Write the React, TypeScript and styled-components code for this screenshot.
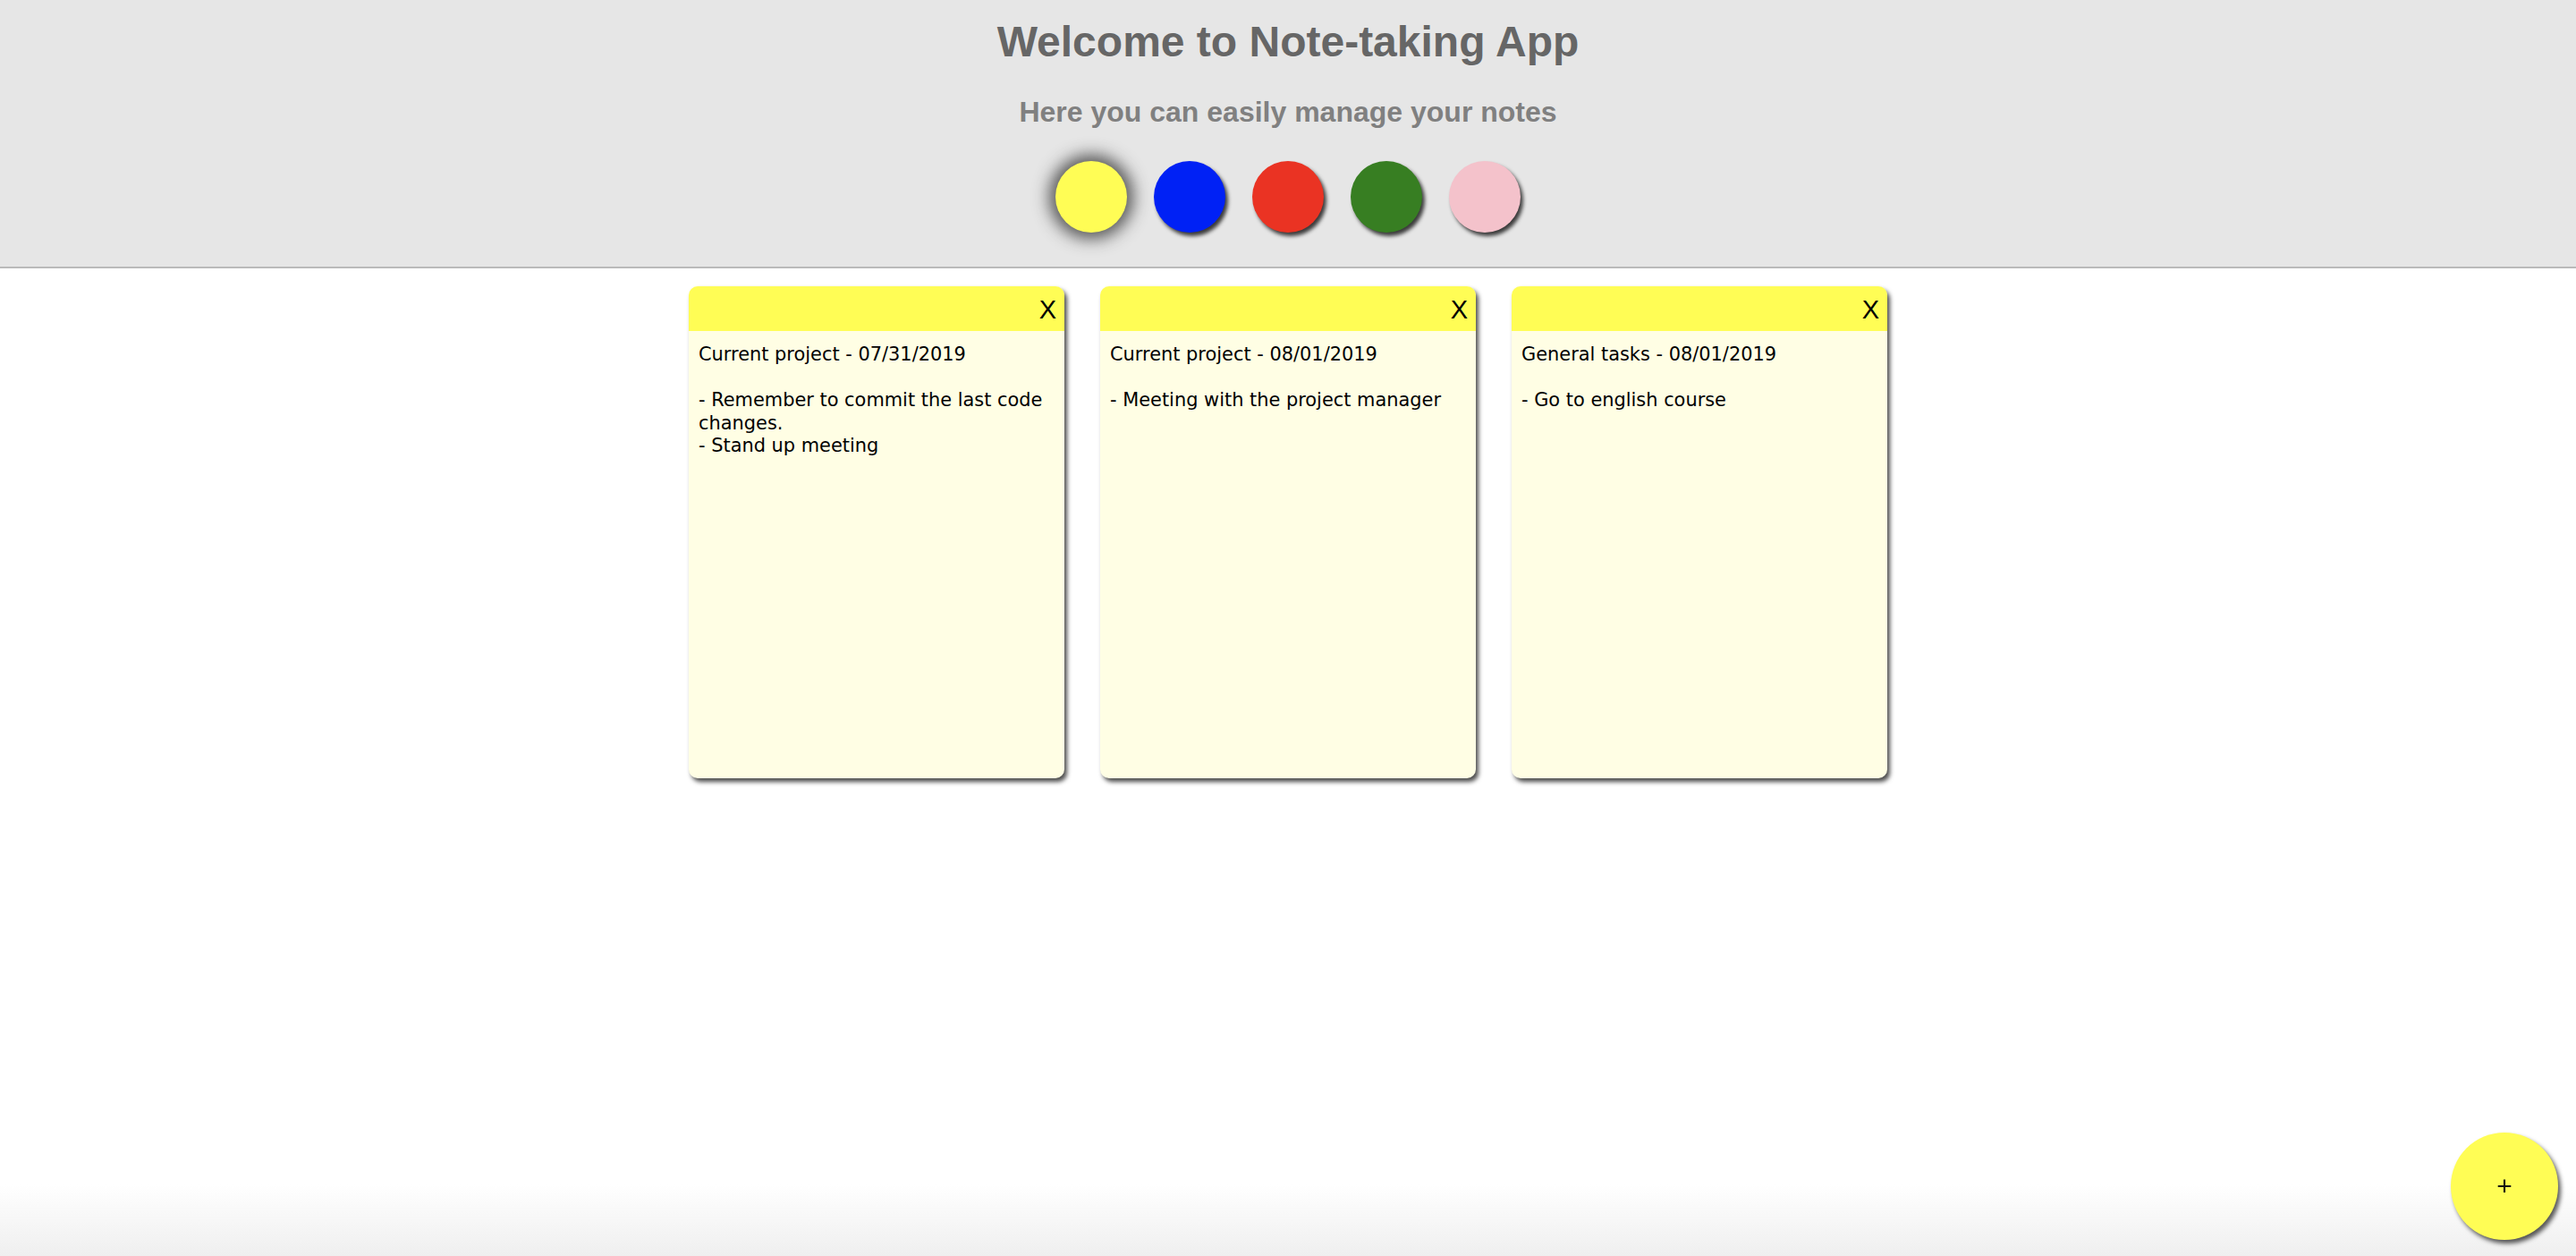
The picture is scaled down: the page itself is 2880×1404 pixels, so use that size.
import React from "react";
import styled, { createGlobalStyle } from "styled-components";

const GlobalStyle = createGlobalStyle`
  html, body {
    margin: 0;
    padding: 0;
    height: 100%;
  }
  body {
    font-family: "Liberation Sans", Arial, sans-serif;
    background: #ffffff;
  }
  #root {
    min-height: 100%;
  }
`;

const Page = styled.div`
  min-height: 100vh;
  display: flex;
  flex-direction: column;
  background: linear-gradient(to bottom, #ffffff calc(100% - 80px), #efefef 100%);
`;

const Header = styled.header`
  background: #e6e6e6;
  border-bottom: 2px solid #bababa;
  padding: 19px 0 38px;
  display: flex;
  flex-direction: column;
  align-items: center;
`;

const Title = styled.h1`
  margin: 0;
  font-family: "Liberation Sans", Arial, sans-serif;
  font-weight: 700;
  font-size: 48px;
  line-height: 56px;
  color: #666666;
`;

const Subtitle = styled.h4`
  margin: 30px 0 0;
  font-family: "Liberation Sans", Arial, sans-serif;
  font-weight: 700;
  font-size: 32px;
  line-height: 40px;
  color: #808080;
`;

const ColorRow = styled.div`
  margin-top: 35px;
  display: flex;
  gap: 30px;
  justify-content: center;
`;

const ColorDot = styled.button<{ $color: string; $active?: boolean }>`
  width: 80px;
  height: 80px;
  padding: 0;
  border: none;
  border-radius: 50%;
  background: ${(p) => p.$color};
  cursor: pointer;
  box-shadow: ${(p) =>
    p.$active
      ? "0 0 18px 7px rgba(70, 70, 70, 0.9)"
      : "3px 4px 4px rgba(0, 0, 0, 0.75)"};
`;

const Board = styled.main`
  display: flex;
  justify-content: center;
  align-items: flex-start;
  gap: 40px;
  padding-top: 20px;
`;

const Note = styled.div`
  width: 420px;
  height: 550px;
  border-radius: 10px;
  overflow: hidden;
  background: #fffee4;
  box-shadow: 3px 4px 5px rgba(0, 0, 0, 0.7);
  display: flex;
  flex-direction: column;
`;

const NoteBar = styled.div`
  height: 50px;
  flex: none;
  background: #fffd55;
  display: flex;
  align-items: center;
  justify-content: flex-end;
  padding-right: 7px;
`;

const CloseButton = styled.button`
  border: none;
  background: transparent;
  padding: 0 2px;
  font-family: "Liberation Sans", Arial, sans-serif;
  font-size: 29px;
  line-height: 32px;
  color: #000;
  cursor: pointer;
  margin-top: 2px;
`;

const NoteText = styled.textarea`
  flex: 1;
  border: none;
  outline: none;
  resize: none;
  background: transparent;
  padding: 14px 11px 12px;
  margin: 0;
  font-family: "DejaVu Sans", Verdana, sans-serif;
  font-size: 20.9px;
  line-height: 25.5px;
  color: #000;
  caret-color: #000;
`;

const AddButton = styled.button`
  position: fixed;
  right: 20px;
  bottom: 18px;
  width: 120px;
  height: 120px;
  border-radius: 50%;
  border: none;
  background: #fffd55;
  box-shadow: 3px 4px 5px rgba(0, 0, 0, 0.65);
  font-family: "Liberation Sans", Arial, sans-serif;
  font-size: 30px;
  line-height: 1;
  color: #111;
  cursor: pointer;
  display: flex;
  align-items: center;
  justify-content: center;
  padding: 0;
`;

const colors = [
  { name: "yellow", value: "#fffd55" },
  { name: "blue", value: "#0021f5" },
  { name: "red", value: "#ea3323" },
  { name: "green", value: "#377e22" },
  { name: "pink", value: "#f4c2cb" },
];

const notes = [
  {
    id: 1,
    text: "Current project - 07/31/2019\n\n- Remember to commit the last code changes.\n- Stand up meeting",
  },
  {
    id: 2,
    text: "Current project - 08/01/2019\n\n- Meeting with the project manager",
  },
  {
    id: 3,
    text: "General tasks - 08/01/2019\n\n- Go to english course",
  },
];

export default function App() {
  return (
    <>
      <GlobalStyle />
      <Page>
        <Header>
          <Title>Welcome to Note-taking App</Title>
          <Subtitle>Here you can easily manage your notes</Subtitle>
          <ColorRow>
            {colors.map((c, i) => (
              <ColorDot key={c.name} $color={c.value} $active={i === 0} aria-label={c.name} />
            ))}
          </ColorRow>
        </Header>
        <Board>
          {notes.map((n, i) => (
            <Note key={n.id}>
              <NoteBar>
                <CloseButton>X</CloseButton>
              </NoteBar>
              <NoteText
                defaultValue={n.text}
                spellCheck={false}
                autoFocus={i === notes.length - 1}
                onFocus={(e) => {
                  const el = e.currentTarget;
                  el.setSelectionRange(el.value.length, el.value.length);
                }}
              />
            </Note>
          ))}
        </Board>
        <AddButton>+</AddButton>
      </Page>
    </>
  );
}
